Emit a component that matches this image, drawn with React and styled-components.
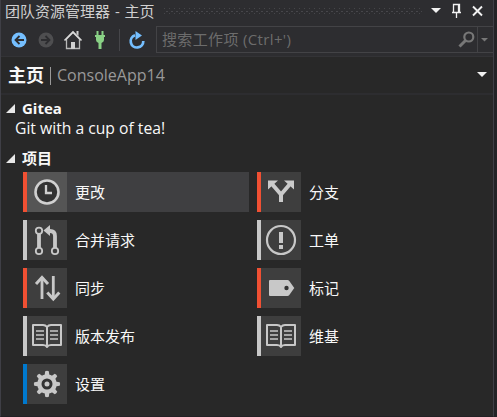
import React from "react";
import styled, { createGlobalStyle } from "styled-components";

const Global = createGlobalStyle`
  * { box-sizing: border-box; }
  body { margin: 0; background: #252526; overflow: hidden; }
`;

const Window = styled.div`
  width: 497px;
  height: 417px;
  display: flex;
  background: #232326;
  font-family: "Open Sans", "Noto Sans CJK SC", sans-serif;
  font-size: 15px;
  color: #f8f8f8;
  white-space: nowrap;
`;

const Panel = styled.div`
  width: 494px;
  height: 417px;
  display: flex;
  flex-direction: column;
  background: #282828;
  border-left: 1px solid #3f3f46;
  border-right: 1px solid #3f3f46;
  border-bottom: 1px solid #232024;
`;

const TitleBar = styled.header`
  height: 22px;
  display: flex;
  align-items: center;
  background: #2d2d30;
  padding-left: 4px;
  color: #d0d0d0;
`;

const Title = styled.span`
  width: 159px;
  line-height: 22px;
  word-spacing: 1px;
`;

const Icon = styled.svg`
  display: block;
  flex: none;
  overflow: visible;
`;

const Toolbar = styled.div`
  height: 35px;
  display: flex;
  align-items: center;
  background: #2d2d30;
  border-bottom: 1px solid #333336;
`;

const SearchBox = styled.div`
  width: 337px;
  height: 27px;
  margin-left: auto;
  display: flex;
  align-items: center;
  border: 1px solid #434346;
  border-right: 0;
  color: #6c6c6c;
`;

const Placeholder = styled.span`
  flex: 1;
  padding-left: 5px;
  line-height: 25px;
  letter-spacing: 0.35px;
`;

const PageHeader = styled.div`
  height: 38px;
  display: flex;
  align-items: center;
  padding: 0 6px 0 7px;
  border-bottom: 2px solid #2d2d30;
`;

const PageTitle = styled.strong`
  font-size: 18px;
  line-height: 36px;
`;

const Rule = styled.span`
  width: 1px;
  height: 18px;
  margin: 1px 6px 0 6px;
  background: #999;
`;

const Project = styled.span`
  flex: 1;
  color: #999;
  font-size: 16px;
  line-height: 36px;
`;

const HeaderCaret = styled.span`
  padding-bottom: 2px;
`;

const SectionTitle = styled.h2`
  height: 20px;
  margin: ${(p) => p.$top}px 0 0;
  padding-left: 5px;
  display: flex;
  align-items: center;
  gap: 7px;
  font-size: 15px;
  line-height: 20px;
  font-weight: 700;
`;

const Description = styled.p`
  margin: 0;
  padding-left: 14px;
  height: 20px;
  font-size: 15.7px;
  line-height: 20px;
`;

const Tiles = styled.div`
  display: grid;
  grid-template-columns: 226px 226px;
  grid-auto-rows: 40px;
  gap: 8px;
  margin: 4px 0 0 22px;
`;

const Tile = styled.div`
  display: flex;
  align-items: center;
  border-left: 4px solid ${(p) => p.$color};
  background: ${(p) => (p.$active ? "#3f3f41" : "transparent")};
`;

const TileIcon = styled.div`
  width: 40px;
  height: 40px;
  margin-right: 8px;
  background: ${(p) => (p.$active ? "#555" : "#3e3e3e")};
`;

const TileLabel = styled.span`
  line-height: 20px;
  padding-bottom: 1px;
`;

const glyphs = {
  clock: (
    <g fill="none" stroke="#d0d0d0">
      <circle cx="20" cy="20" r="11.5" strokeWidth="2.6" fill="#333" />
      <path d="M19 13v8h6" strokeWidth="2.3" />
    </g>
  ),
  fork: (
    <g>
      <path d="M20 30v-7.500L11 12M20 22.500L29 12" fill="none" stroke="#cacaca" strokeWidth="4" />
      <path d="M7 8.500h10L7 17.500zM33 8.500H23l10 9z" fill="#cacaca" />
    </g>
  ),
  pull: (
    <g fill="none" stroke="#c8c8c8">
      <circle cx="12" cy="10.800" r="3.200" strokeWidth="1.800" />
      <circle cx="12" cy="31" r="3.200" strokeWidth="1.800" />
      <circle cx="28" cy="31" r="3.200" strokeWidth="1.800" />
      <path d="M12 14v14M28 28V16q0-5-5-5h-1" strokeWidth="3.800" />
      <path d="M16.500 10.500L23 5v11z" fill="#c8c8c8" stroke="none" />
    </g>
  ),
  alert: (
    <g fill="#c8c8c8">
      <circle cx="20" cy="20" r="14" fill="none" stroke="#c8c8c8" strokeWidth="2.200" />
      <path d="M18 12h4v11h-4zM18 25h4v4h-4z" />
    </g>
  ),
  sync: (
    <g fill="none" stroke="#c8c8c8">
      <path d="M15 31V9M26.300 8v23" strokeWidth="2.800" />
      <path d="M9 16l6-6.500 6 6.500M20.300 24.500l6 6.500 6-6.500" strokeWidth="3" />
    </g>
  ),
  tag: (
    <g>
      <path d="M9 12h17.500q1 0 1.800 1l5 7-5 7q-.8 1-1.800 1H9q-1 0-1-1V13q0-1 1-1z" fill="#c8c8c8" />
      <circle cx="25.500" cy="20" r="2.200" fill="#333" />
    </g>
  ),
  book: (
    <g fill="none" stroke="#c8c8c8" strokeWidth="2">
      <path d="M20 11q-1.500-2-4-2H6v20h10q3 0 4 2 1-2 4-2h10V9H24q-2.500 0-4 2v20" strokeLinejoin="round" />
      <path d="M9 15h8M9 19h8M9 23h8M23 15h8M23 19h8M23 23h8" strokeWidth="1.700" />
    </g>
  ),
  gear: (
    <g>
      <circle cx="20" cy="20" r="9.800" fill="#c8c8c8" />
      {[0, 45, 90, 135, 180, 225, 270, 315].map((a) => (
        <path key={a} d="M17.500 12l.7-4.700q1.800-.9 3.600 0l.7 4.700z" fill="#c8c8c8" transform={`rotate(${a} 20 20)`} />
      ))}
      <circle cx="20" cy="20" r="4" fill="#c8c8c8" stroke="#333" strokeWidth="3" />
    </g>
  ),
};

const items = [
  ["更改", "clock", "#f05033", true],
  ["分支", "fork", "#f05033"],
  ["合并请求", "pull", "#c8c8c8"],
  ["工单", "alert", "#c8c8c8"],
  ["同步", "sync", "#f05033"],
  ["标记", "tag", "#f05033"],
  ["版本发布", "book", "#c8c8c8"],
  ["维基", "book", "#c8c8c8"],
  ["设置", "gear", "#0079ce"],
];

const Grip = () => (
  <Icon width="259" height="6" shapeRendering="crispEdges">
    <defs>
      <pattern id="grip" width="5" height="6" patternUnits="userSpaceOnUse">
        <path d="M1 0h1v1H1zM3 3h2v1H3zM1 5h1v1H1z" fill="#46464a" />
      </pattern>
    </defs>
    <rect width="259" height="6" fill="url(#grip)" />
  </Icon>
);

const WindowButtons = () => (
  <Icon width="71" height="22">
    <path d="M9 8h10l-5 5z" fill="#f1f1f1" />
    <path d="M31.500 12.500V4.500h6v8M30 12.500h9M34.500 13v5M36.500 5v7" fill="none" stroke="#f1f1f1" strokeWidth="1.300" />
    <path d="M51 6.500l9 9M60 6.500l-9 9" stroke="#f1f1f1" strokeWidth="1.900" />
  </Icon>
);

const ToolbarIcons = () => (
  <Icon width="150" height="34">
    <circle cx="18" cy="18" r="7.500" fill="#75bfff" />
    <path d="M23 18h-8M18.500 14l-4 4 4 4" fill="none" stroke="#2d2d30" strokeWidth="1.800" />
    <circle cx="45" cy="18" r="7.500" fill="#4e4e50" />
    <path d="M40 18h8M44.500 14l4 4-4 4" fill="none" stroke="#2d2d30" strokeWidth="1.800" />
    <path d="M65.500 17v9.500h13V17L72 10.500z" fill="#303033" stroke="#b8b8b8" strokeWidth="1.300" />
    <path d="M63.500 18.500L72 10l8.500 8.500" fill="none" stroke="#d8d8d8" strokeWidth="1.600" />
    <path d="M70 20h4v7h-4zM75.500 9h2v5l-2-2z" fill="#d0d0d0" />
    <path d="M95.500 9h2v4h3V9h2v4H104v2h-1v3q0 2-2.500 3v6h-3v-6q-2.500-1-2.500-3v-3h-1v-2h1.500z" fill="#89d185" />
    <path d="M118.500 7v22" stroke="#46464a" />
    <path d="M134 13.200A6.300 6.300 0 1 0 142.300 19" fill="none" stroke="#75bfff" strokeWidth="2.700" />
    <path d="M134.500 9l6.500 4.500-6.500 4.500z" fill="#75bfff" />
  </Icon>
);

const SearchIcons = () => (
  <Icon width="36" height="25">
    <circle cx="11.800" cy="10" r="4.500" fill="none" stroke="#777" strokeWidth="2.200" />
    <path d="M8.500 13.500l-6 6" stroke="#777" strokeWidth="3" />
    <path d="M20.500 0v25" stroke="#434346" />
    <path d="M24 11h7l-3.500 3.500z" fill="#777" />
  </Icon>
);

const Expander = () => (
  <Icon width="9" height="9">
    <path d="M9 0v9H0z" fill="#e8e8e8" />
  </Icon>
);

export default function App() {
  return (
    <Window>
      <Global />
      <Panel>
        <TitleBar>
          <Title>团队资源管理器 - 主页</Title>
          <Grip />
          <WindowButtons />
        </TitleBar>
        <Toolbar>
          <ToolbarIcons />
          <SearchBox>
            <Placeholder>搜索工作项 (Ctrl+')</Placeholder>
            <SearchIcons />
          </SearchBox>
        </Toolbar>
        <PageHeader>
          <PageTitle>主页</PageTitle>
          <Rule />
          <Project>ConsoleApp14</Project>
          <HeaderCaret>
            <Icon width="10" height="5">
              <path d="M0 0h10L5 5z" fill="#f1f1f1" />
            </Icon>
          </HeaderCaret>
        </PageHeader>
        <SectionTitle $top={3}><Expander />Gitea</SectionTitle>
        <Description>Git with a cup of tea!</Description>
        <SectionTitle $top={10}><Expander />项目</SectionTitle>
        <Tiles>
          {items.map(([label, icon, color, active]) => (
            <Tile key={label} $color={color} $active={active}>
              <TileIcon $active={active}>
                <Icon width="40" height="40">{glyphs[icon]}</Icon>
              </TileIcon>
              <TileLabel>{label}</TileLabel>
            </Tile>
          ))}
        </Tiles>
      </Panel>
    </Window>
  );
}
